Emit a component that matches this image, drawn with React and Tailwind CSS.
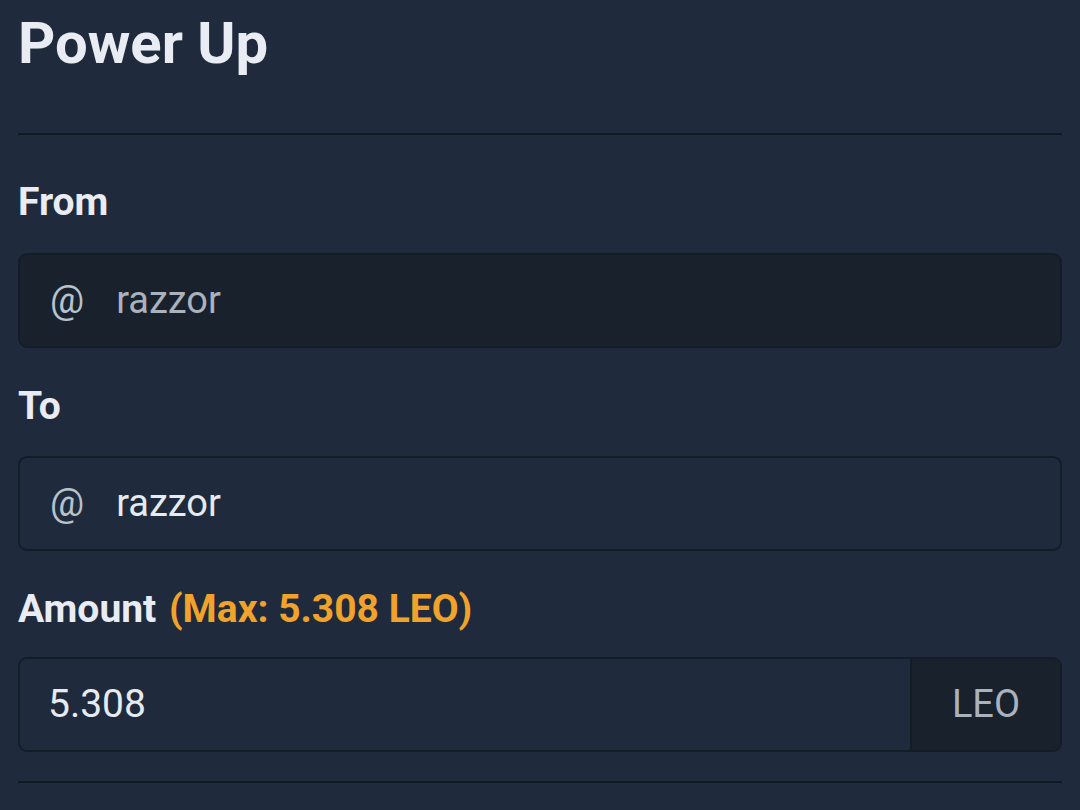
const font = { fontFamily: 'Roboto, "Liberation Sans", sans-serif' };

const Label = ({ children }) => (
  <div className="text-[39px] leading-[46px] font-bold text-[#e9edf3]">{children}</div>
);

const UserField = ({ name, disabled }) => (
  <div
    className={`flex items-center h-[95px] rounded-[9px] border-2 border-[#141c28] ${
      disabled ? 'bg-[#19212c] text-[#a9b2bd]' : 'bg-[#1f2b3d] text-[#e6ebf1]'
    }`}
  >
    <span className="pl-[30px] pr-[32px] text-[38px] text-[#b9c1cb]">@</span>
    <span className="text-[38px]">{name}</span>
  </div>
);

export default function App() {
  return (
    <div style={font} className="w-[1080px] h-[810px] overflow-hidden bg-[#1f2b3d] px-[18px] pt-[8px]">
      <h1 className="text-[58px] leading-[70px] font-bold text-[#e9edf3]">Power Up</h1>
      <div className="mt-[55px] h-[2px] bg-[#111925]" />

      <div className="mt-[44px]">
        <Label>From</Label>
        <div className="mt-[28px]">
          <UserField name="razzor" disabled />
        </div>
      </div>

      <div className="mt-[35px]">
        <Label>To</Label>
        <div className="mt-[27px]">
          <UserField name="razzor" />
        </div>
      </div>

      <div className="mt-[35px]">
        <Label>
          Amount <span className="pl-[3px] text-[#f0a22b]">(Max: 5.308 LEO)</span>
        </Label>
        <div className="mt-[25px] flex h-[95px] rounded-[9px] border-2 border-[#141c28] overflow-hidden">
          <div className="flex-1 flex items-center pl-[28px] text-[39px] text-[#e6ebf1] bg-[#1f2b3d]">
            5.308
          </div>
          <div className="w-[150px] flex items-center justify-center border-l-2 border-[#141c28] bg-[#19212c] text-[38px] text-[#a9b2bd]">
            LEO
          </div>
        </div>
      </div>

      <div className="mt-[29px] h-[2px] bg-[#111925]" />
    </div>
  );
}
